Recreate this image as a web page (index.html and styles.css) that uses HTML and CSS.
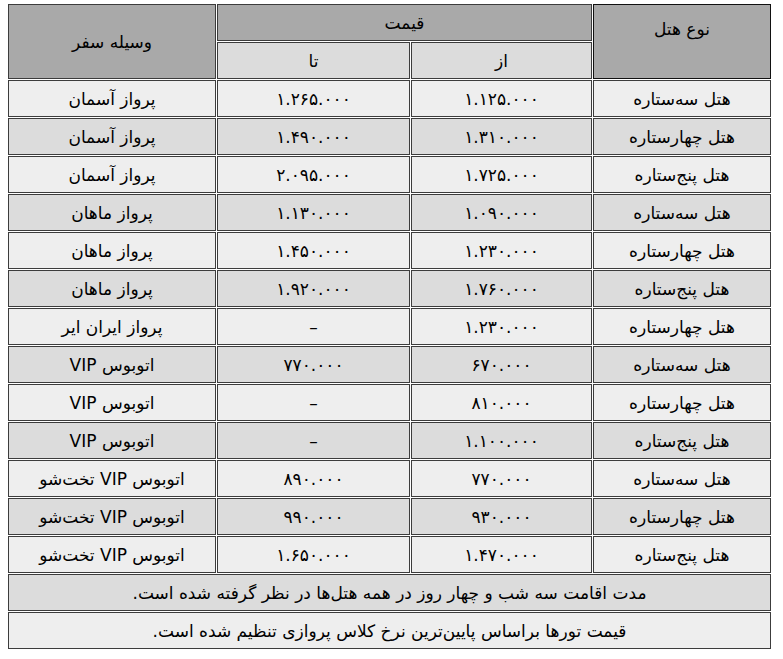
FILE: index.html
```html
<!DOCTYPE html>
<html lang="fa" dir="rtl">
<head>
<meta charset="utf-8">
<link rel="stylesheet" href="styles.css">
</head>
<body>
<div class="wrap">
<table class="tours">
  <colgroup>
    <col class="c-type">
    <col class="c-az">
    <col class="c-ta">
    <col class="c-veh">
  </colgroup>
  <thead>
    <tr>
      <th class="h-dark type-head" rowspan="2">نوع هتل</th>
      <th class="h-dark" colspan="2">قیمت</th>
      <th class="h-dark" rowspan="2">وسیله سفر</th>
    </tr>
    <tr>
      <th class="h-light">از</th>
      <th class="h-light">تا</th>
    </tr>
  </thead>
  <tbody>
    <tr class="odd"><td>هتل سه‌ستاره</td><td>۱.۱۲۵.۰۰۰</td><td>۱.۲۶۵.۰۰۰</td><td>پرواز آسمان</td></tr>
    <tr class="even"><td>هتل چهارستاره</td><td>۱.۳۱۰.۰۰۰</td><td>۱.۴۹۰.۰۰۰</td><td>پرواز آسمان</td></tr>
    <tr class="odd"><td>هتل پنج‌ستاره</td><td>۱.۷۲۵.۰۰۰</td><td>۲.۰۹۵.۰۰۰</td><td>پرواز آسمان</td></tr>
    <tr class="even"><td>هتل سه‌ستاره</td><td>۱.۰۹۰.۰۰۰</td><td>۱.۱۳۰.۰۰۰</td><td>پرواز ماهان</td></tr>
    <tr class="odd"><td>هتل چهارستاره</td><td>۱.۲۳۰.۰۰۰</td><td>۱.۴۵۰.۰۰۰</td><td>پرواز ماهان</td></tr>
    <tr class="even"><td>هتل پنج‌ستاره</td><td>۱.۷۶۰.۰۰۰</td><td>۱.۹۲۰.۰۰۰</td><td>پرواز ماهان</td></tr>
    <tr class="odd"><td>هتل چهارستاره</td><td>۱.۲۳۰.۰۰۰</td><td>–</td><td>پرواز ایران ایر</td></tr>
    <tr class="even"><td>هتل سه‌ستاره</td><td>۶۷۰.۰۰۰</td><td>۷۷۰.۰۰۰</td><td>اتوبوس VIP</td></tr>
    <tr class="odd"><td>هتل چهارستاره</td><td>۸۱۰.۰۰۰</td><td>–</td><td>اتوبوس VIP</td></tr>
    <tr class="even"><td>هتل پنج‌ستاره</td><td>۱.۱۰۰.۰۰۰</td><td>–</td><td>اتوبوس VIP</td></tr>
    <tr class="odd"><td>هتل سه‌ستاره</td><td>۷۷۰.۰۰۰</td><td>۸۹۰.۰۰۰</td><td>اتوبوس VIP تخت‌شو</td></tr>
    <tr class="even"><td>هتل چهارستاره</td><td>۹۳۰.۰۰۰</td><td>۹۹۰.۰۰۰</td><td>اتوبوس VIP تخت‌شو</td></tr>
    <tr class="odd"><td>هتل پنج‌ستاره</td><td>۱.۴۷۰.۰۰۰</td><td>۱.۶۵۰.۰۰۰</td><td>اتوبوس VIP تخت‌شو</td></tr>
    <tr class="even"><td colspan="4">مدت اقامت سه شب و چهار روز در همه هتل‌ها در نظر گرفته شده است.</td></tr>
    <tr class="odd"><td colspan="4">قیمت تورها براساس پایین‌ترین نرخ کلاس پروازی تنظیم شده است.</td></tr>
  </tbody>
</table>
</div>
</body>
</html>
```

FILE: styles.css
```css
html, body {
  margin: 0;
  padding: 0;
  background: #ffffff;
}

.wrap {
  padding: 3px 11px 0 7px;
  direction: ltr;
}

.tours {
  direction: rtl;
  width: 765px;
  table-layout: fixed;
  border-collapse: separate;
  border-spacing: 1px;
  font-family: "DejaVu Sans", Tahoma, sans-serif;
  font-size: 17px;
  color: #000;
}

.c-type { width: 178px; }
.c-az { width: 181px; }
.c-ta { width: 193px; }
.c-veh { width: 208px; }

.tours th,
.tours td {
  border: 1px solid #3c3c3c;
  height: 37px;
  padding: 0 4px;
  box-sizing: border-box;
  text-align: center;
  vertical-align: middle;
  font-weight: normal;
  line-height: 20px;
}

.tours .h-dark { background: #a9a9a9; }
.tours .h-light { background: #dcdcdc; }

.tours .type-head {
  border-color: #111;
  vertical-align: top;
  padding-top: 14px;
}

.odd td { background: #eeeeee; }
.even td { background: #dcdcdc; }
```
